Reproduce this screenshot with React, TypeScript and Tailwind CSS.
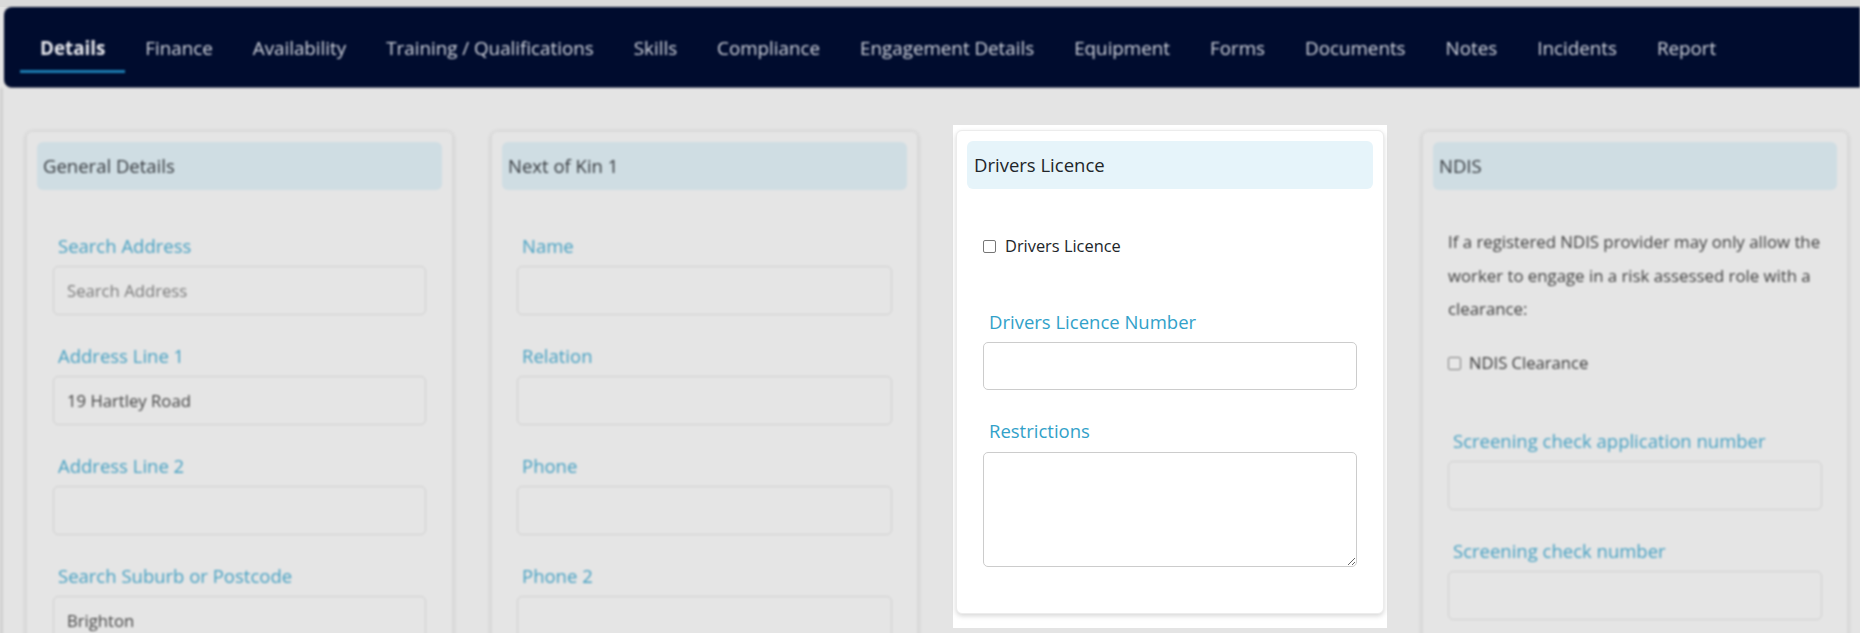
import React from "react";

const tabs = [
  "Details",
  "Finance",
  "Availability",
  "Training / Qualifications",
  "Skills",
  "Compliance",
  "Engagement Details",
  "Equipment",
  "Forms",
  "Documents",
  "Notes",
  "Incidents",
  "Report",
];

function DimField({ label, value, placeholder }: { label: string; value?: string; placeholder?: string }) {
  return (
    <div className="mb-[27px]">
      <div className="pl-[5px] leading-[28px] text-[18.5px] text-[#45a0c2]">{label}</div>
      <div className="mt-[6px] flex h-[49px] items-center rounded-[5px] border border-[#cfcfcf] bg-[#e5e5e5] px-[13px] text-[16.7px] leading-[20px]">
        {value ? <span className="text-[#454545]">{value}</span> : placeholder ? <span className="text-[#7a7a7a]">{placeholder}</span> : null}
      </div>
    </div>
  );
}

function DimCard({ title, children }: { title: string; children: React.ReactNode }) {
  return (
    <div className="rounded-[6px] border border-[#d8d8d8] bg-[#e5e5e5] p-[10px] shadow-[0_1px_5px_rgba(0,0,0,0.13)]">
      <div className="flex h-[48px] items-center rounded-[6px] bg-[#cfdde3] px-[6px] text-[18.5px] text-[#35393e]">{title}</div>
      {children}
    </div>
  );
}

function DimCheckbox({ label }: { label: string }) {
  return (
    <div className="flex h-[28px] items-center">
      <span className="h-[13px] w-[13px] rounded-[2px] border border-[#7d7d7d] bg-[#e8e8e8]" />
      <span className="ml-[8px] text-[16.6px] text-[#3a3a3a]">{label}</span>
    </div>
  );
}

export default function App() {
  return (
    <div
      className="h-[633px] w-[1860px] overflow-hidden bg-[#e4e4e4]"
      style={{ fontFamily: '"Open Sans", "Noto Sans", sans-serif' }}
    >
      <div className="h-[7px] bg-[#dadada]" />
      <div className="blur-[0.8px]">
        <nav className="ml-[4px] flex h-[81px] items-start rounded-l-[8px] border-b border-[#5b6073] bg-[#000c2e] pl-[16px]">
          {tabs.map((t, i) => (
            <div
              key={t}
              className={
                i === 0
                  ? "whitespace-nowrap border-b-[3px] border-[#1c7db2] px-[20px] pb-[10px] pt-[29px] text-[18.8px] font-bold leading-[24px] text-[#e8e9ee]"
                  : "whitespace-nowrap border-b-[3px] border-transparent px-[20px] pb-[10px] pt-[29px] text-[18.8px] leading-[24px] text-[#d3d7e0]"
              }
            >
              {t}
            </div>
          ))}
        </nav>
      </div>

      <div className="grid grid-cols-4">
        {/* Column 1 */}
        <div className="border-l-[3px] border-[#d0d0d0] pl-[23px] pr-[12px] pt-[43px] blur-[0.8px]">
          <DimCard title="General Details">
            <div className="px-[16px] pt-[42px]">
              <DimField label="Search Address" placeholder="Search Address" />
              <DimField label="Address Line 1" value="19 Hartley Road" />
              <DimField label="Address Line 2" />
              <DimField label="Search Suburb or Postcode" value="Brighton" />
            </div>
          </DimCard>
        </div>

        {/* Column 2 */}
        <div className="pl-[26px] pr-[12px] pt-[43px] blur-[0.8px]">
          <DimCard title="Next of Kin 1">
            <div className="px-[15px] pt-[42px]">
              <DimField label="Name" />
              <DimField label="Relation" />
              <DimField label="Phone" />
              <DimField label="Phone 2" />
            </div>
          </DimCard>
        </div>

        {/* Column 3 - highlighted */}
        <div className="pl-[23px] pr-[8px] pt-[37px]">
          <div className="bg-white px-[3px] pb-[14px] pt-[5px]">
            <div className="rounded-[6px] border border-[#ececec] bg-white p-[10px] shadow-[0_2px_5px_rgba(0,0,0,0.16)]">
              <div className="flex h-[48px] items-center rounded-[6px] bg-[#e6f4fa] px-[7px] text-[18.5px] text-[#212529]">
                Drivers Licence
              </div>
              <div className="px-[16px] pb-[36px] pt-[43px]">
                <div className="flex h-[28px] items-center">
                  <span className="h-[13px] w-[13px] rounded-[2px] border border-[#767676] bg-white" />
                  <span className="ml-[9px] text-[16.4px] text-[#212529]">Drivers Licence</span>
                </div>
                <div className="mt-[48px] pl-[6px] text-[18.5px] leading-[28px] text-[#31a1c9]">Drivers Licence Number</div>
                <div className="mt-[6px] h-[48px] rounded-[5px] border border-[#cccccc] bg-white" />
                <div className="mt-[27px] pl-[6px] text-[18.5px] leading-[28px] text-[#31a1c9]">Restrictions</div>
                <textarea
                  className="mt-[7px] block h-[115px] w-full resize-y rounded-[5px] border border-[#cccccc] bg-white outline-none"
                  defaultValue=""
                />
              </div>
            </div>
          </div>
        </div>

        {/* Column 4 */}
        <div className="pl-[27px] pr-[12px] pt-[43px] blur-[0.8px]">
          <DimCard title="NDIS">
            <div className="px-[15px] pt-[35px]">
              <p className="whitespace-nowrap text-[16.8px] leading-[33.6px] text-[#3f3f3f]">
                If a registered NDIS provider may only allow the
                <br />
                worker to engage in a risk assessed role with a
                <br />
                clearance:
              </p>
              <div className="mt-[24px]">
                <DimCheckbox label="NDIS Clearance" />
              </div>
              <div className="mt-[49px]">
                <DimField label="Screening check application number" />
                <DimField label="Screening check number" />
              </div>
            </div>
          </DimCard>
        </div>
      </div>
    </div>
  );
}
